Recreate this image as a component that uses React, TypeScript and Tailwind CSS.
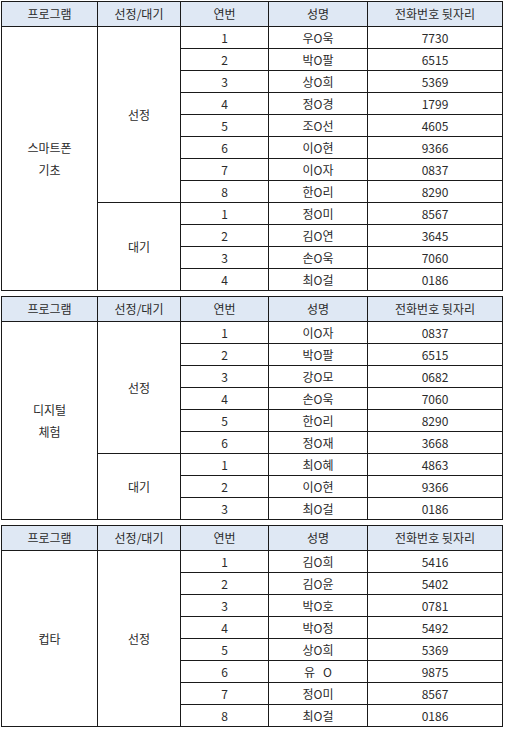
type Member = { name: string; phone: string }
type Group = { status: string; members: Member[] }
type Program = { title: string[]; groups: Group[] }

const programs: Program[] = [
  {
    title: ['스마트폰', '기초'],
    groups: [
      {
        status: '선정',
        members: [
          { name: '우O욱', phone: '7730' },
          { name: '박O팔', phone: '6515' },
          { name: '상O희', phone: '5369' },
          { name: '정O경', phone: '1799' },
          { name: '조O선', phone: '4605' },
          { name: '이O현', phone: '9366' },
          { name: '이O자', phone: '0837' },
          { name: '한O리', phone: '8290' },
        ],
      },
      {
        status: '대기',
        members: [
          { name: '정O미', phone: '8567' },
          { name: '김O연', phone: '3645' },
          { name: '손O욱', phone: '7060' },
          { name: '최O걸', phone: '0186' },
        ],
      },
    ],
  },
  {
    title: ['디지털', '체험'],
    groups: [
      {
        status: '선정',
        members: [
          { name: '이O자', phone: '0837' },
          { name: '박O팔', phone: '6515' },
          { name: '강O모', phone: '0682' },
          { name: '손O욱', phone: '7060' },
          { name: '한O리', phone: '8290' },
          { name: '정O재', phone: '3668' },
        ],
      },
      {
        status: '대기',
        members: [
          { name: '최O혜', phone: '4863' },
          { name: '이O현', phone: '9366' },
          { name: '최O걸', phone: '0186' },
        ],
      },
    ],
  },
  {
    title: ['컵타'],
    groups: [
      {
        status: '선정',
        members: [
          { name: '김O희', phone: '5416' },
          { name: '김O윤', phone: '5402' },
          { name: '박O호', phone: '0781' },
          { name: '박O정', phone: '5492' },
          { name: '상O희', phone: '5369' },
          { name: '유\u00a0\u00a0\u00a0O', phone: '9875' },
          { name: '정O미', phone: '8567' },
          { name: '최O걸', phone: '0186' },
        ],
      },
    ],
  },
]

const headers = ['프로그램', '선정/대기', '연번', '성명', '전화번호 뒷자리']
const cell = 'border border-[#1a1a1a] text-center align-middle p-0'

const ProgramTable = ({ program }: { program: Program }) => {
  const total = program.groups.reduce((sum, g) => sum + g.members.length, 0)

  return (
    <table className="table-fixed border-collapse w-[501px] text-[12px] leading-none text-[#2b2b2b]">
      <colgroup>
        <col className="w-[96px]" />
        <col className="w-[83px]" />
        <col className="w-[88px]" />
        <col className="w-[99px]" />
        <col className="w-[135px]" />
      </colgroup>
      <thead>
        <tr className="h-[25px] bg-[#dfe8f4]">
          {headers.map((h) => (
            <th key={h} className={`${cell} font-normal`}>
              {h}
            </th>
          ))}
        </tr>
      </thead>
      <tbody>
        {program.groups.map((group, gi) =>
          group.members.map((m, mi) => (
            <tr key={`${gi}-${mi}`} className="h-[22px]">
              {gi === 0 && mi === 0 && (
                <td rowSpan={total} className={`${cell} leading-[22px]`}>
                  {program.title.map((line) => (
                    <div key={line}>{line}</div>
                  ))}
                </td>
              )}
              {mi === 0 && (
                <td rowSpan={group.members.length} className={cell}>
                  {group.status}
                </td>
              )}
              <td className={cell}>{mi + 1}</td>
              <td className={`${cell} whitespace-pre`}>{m.name}</td>
              <td className={cell}>{m.phone}</td>
            </tr>
          ))
        )}
      </tbody>
    </table>
  )
}

export default function App() {
  return (
    <div
      className="bg-white min-h-[731px] pt-[1px] pl-[1px] flex flex-col gap-[5px]"
      style={{ fontFamily: '"Noto Sans CJK KR", "Noto Sans", sans-serif' }}
    >
      {programs.map((p) => (
        <ProgramTable key={p.title.join('')} program={p} />
      ))}
    </div>
  )
}
